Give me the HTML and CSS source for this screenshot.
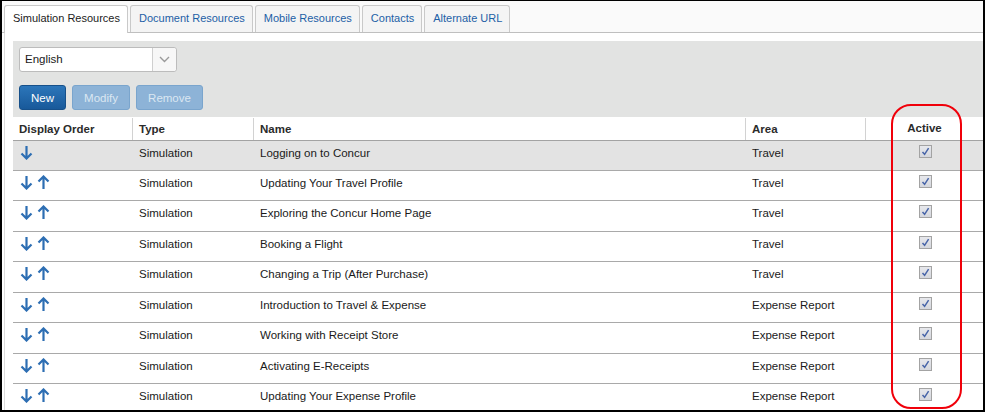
FILE: index.html
```html
<!DOCTYPE html>
<html lang="en">
<head>
<meta charset="utf-8">
<title>Simulation Resources</title>
<link rel="stylesheet" href="styles.css">
</head>
<body>
<div class="frame">
  <div class="tabs">
    <div class="tab active">Simulation Resources</div>
    <div class="tab">Document Resources</div>
    <div class="tab">Mobile Resources</div>
    <div class="tab">Contacts</div>
    <div class="tab">Alternate URL</div>
  </div>
  <div class="pane">
    <div class="toolbar">
      <div class="select">
        <span class="select-text">English</span>
        <span class="select-btn"><svg width="11" height="7" viewBox="0 0 11 7"><path d="M1 1 L5.5 5.5 L10 1" fill="none" stroke="#9a9a9a" stroke-width="1.4"/></svg></span>
      </div>
      <div class="buttons">
        <button class="btn primary">New</button>
        <button class="btn disabled">Modify</button>
        <button class="btn disabled">Remove</button>
      </div>
    </div>
    <div class="grid">
      <div class="row head">
        <div class="cell sep">Display Order</div>
        <div class="cell sep">Type</div>
        <div class="cell sep">Name</div>
        <div class="cell sep">Area</div>
        <div class="cell center">Active</div>
      </div>
      <div class="row hover">
        <div class="cell order"><svg class="arrow" viewBox="0 0 13 15"><path d="M6.5 1 V13.5 M1.5 8.5 L6.5 13.5 L11.5 8.5"/></svg></div>
        <div class="cell">Simulation</div>
        <div class="cell">Logging on to Concur</div>
        <div class="cell">Travel</div>
        <div class="cell center"><span class="check"><svg viewBox="0 0 11 11"><path d="M2.5 6 L4.6 8.3 L8.6 2.2"/></svg></span></div>
      </div>
      <div class="row">
        <div class="cell order"><svg class="arrow" viewBox="0 0 13 15"><path d="M6.5 1 V13.5 M1.5 8.5 L6.5 13.5 L11.5 8.5"/></svg><svg class="arrow" viewBox="0 0 13 15"><path d="M6.5 14 V1.5 M1.5 6.5 L6.5 1.5 L11.5 6.5"/></svg></div>
        <div class="cell">Simulation</div>
        <div class="cell">Updating Your Travel Profile</div>
        <div class="cell">Travel</div>
        <div class="cell center"><span class="check"><svg viewBox="0 0 11 11"><path d="M2.5 6 L4.6 8.3 L8.6 2.2"/></svg></span></div>
      </div>
      <div class="row">
        <div class="cell order"><svg class="arrow" viewBox="0 0 13 15"><path d="M6.5 1 V13.5 M1.5 8.5 L6.5 13.5 L11.5 8.5"/></svg><svg class="arrow" viewBox="0 0 13 15"><path d="M6.5 14 V1.5 M1.5 6.5 L6.5 1.5 L11.5 6.5"/></svg></div>
        <div class="cell">Simulation</div>
        <div class="cell">Exploring the Concur Home Page</div>
        <div class="cell">Travel</div>
        <div class="cell center"><span class="check"><svg viewBox="0 0 11 11"><path d="M2.5 6 L4.6 8.3 L8.6 2.2"/></svg></span></div>
      </div>
      <div class="row">
        <div class="cell order"><svg class="arrow" viewBox="0 0 13 15"><path d="M6.5 1 V13.5 M1.5 8.5 L6.5 13.5 L11.5 8.5"/></svg><svg class="arrow" viewBox="0 0 13 15"><path d="M6.5 14 V1.5 M1.5 6.5 L6.5 1.5 L11.5 6.5"/></svg></div>
        <div class="cell">Simulation</div>
        <div class="cell">Booking a Flight</div>
        <div class="cell">Travel</div>
        <div class="cell center"><span class="check"><svg viewBox="0 0 11 11"><path d="M2.5 6 L4.6 8.3 L8.6 2.2"/></svg></span></div>
      </div>
      <div class="row">
        <div class="cell order"><svg class="arrow" viewBox="0 0 13 15"><path d="M6.5 1 V13.5 M1.5 8.5 L6.5 13.5 L11.5 8.5"/></svg><svg class="arrow" viewBox="0 0 13 15"><path d="M6.5 14 V1.5 M1.5 6.5 L6.5 1.5 L11.5 6.5"/></svg></div>
        <div class="cell">Simulation</div>
        <div class="cell">Changing a Trip (After Purchase)</div>
        <div class="cell">Travel</div>
        <div class="cell center"><span class="check"><svg viewBox="0 0 11 11"><path d="M2.5 6 L4.6 8.3 L8.6 2.2"/></svg></span></div>
      </div>
      <div class="row">
        <div class="cell order"><svg class="arrow" viewBox="0 0 13 15"><path d="M6.5 1 V13.5 M1.5 8.5 L6.5 13.5 L11.5 8.5"/></svg><svg class="arrow" viewBox="0 0 13 15"><path d="M6.5 14 V1.5 M1.5 6.5 L6.5 1.5 L11.5 6.5"/></svg></div>
        <div class="cell">Simulation</div>
        <div class="cell">Introduction to Travel &amp; Expense</div>
        <div class="cell">Expense Report</div>
        <div class="cell center"><span class="check"><svg viewBox="0 0 11 11"><path d="M2.5 6 L4.6 8.3 L8.6 2.2"/></svg></span></div>
      </div>
      <div class="row">
        <div class="cell order"><svg class="arrow" viewBox="0 0 13 15"><path d="M6.5 1 V13.5 M1.5 8.5 L6.5 13.5 L11.5 8.5"/></svg><svg class="arrow" viewBox="0 0 13 15"><path d="M6.5 14 V1.5 M1.5 6.5 L6.5 1.5 L11.5 6.5"/></svg></div>
        <div class="cell">Simulation</div>
        <div class="cell">Working with Receipt Store</div>
        <div class="cell">Expense Report</div>
        <div class="cell center"><span class="check"><svg viewBox="0 0 11 11"><path d="M2.5 6 L4.6 8.3 L8.6 2.2"/></svg></span></div>
      </div>
      <div class="row">
        <div class="cell order"><svg class="arrow" viewBox="0 0 13 15"><path d="M6.5 1 V13.5 M1.5 8.5 L6.5 13.5 L11.5 8.5"/></svg><svg class="arrow" viewBox="0 0 13 15"><path d="M6.5 14 V1.5 M1.5 6.5 L6.5 1.5 L11.5 6.5"/></svg></div>
        <div class="cell">Simulation</div>
        <div class="cell">Activating E-Receipts</div>
        <div class="cell">Expense Report</div>
        <div class="cell center"><span class="check"><svg viewBox="0 0 11 11"><path d="M2.5 6 L4.6 8.3 L8.6 2.2"/></svg></span></div>
      </div>
      <div class="row">
        <div class="cell order"><svg class="arrow" viewBox="0 0 13 15"><path d="M6.5 1 V13.5 M1.5 8.5 L6.5 13.5 L11.5 8.5"/></svg><svg class="arrow" viewBox="0 0 13 15"><path d="M6.5 14 V1.5 M1.5 6.5 L6.5 1.5 L11.5 6.5"/></svg></div>
        <div class="cell">Simulation</div>
        <div class="cell">Updating Your Expense Profile</div>
        <div class="cell">Expense Report</div>
        <div class="cell center"><span class="check"><svg viewBox="0 0 11 11"><path d="M2.5 6 L4.6 8.3 L8.6 2.2"/></svg></span></div>
      </div>
    </div>
  </div>
  <div class="annot"></div>
</div>
</body>
</html>
```

FILE: styles.css
```css
* { box-sizing: border-box; }
html, body { margin: 0; padding: 0; background: #fff; }
body { font-family: "Liberation Sans", Arial, sans-serif; font-size: 11.5px; color: #1a1a1a; }

.frame {
  position: relative;
  width: 985px;
  height: 412px;
  border-style: solid;
  border-color: #000;
  border-width: 1px 2px 2px 2px;
  overflow: hidden;
  background: #fff;
  display: flex;
  flex-direction: column;
}

.tabs {
  display: flex;
  gap: 2px;
  padding: 4px 0 0 2px;
  background: #fafafa;
  border-bottom: 1px solid #bfbfbf;
  height: 32px;
}
.tab {
  height: 27px;
  padding: 0 7px 0 8px;
  border: 1px solid #c9c9c9;
  border-bottom: none;
  border-radius: 3px 3px 0 0;
  background: #f4f4f4;
  color: #1d5fa6;
  font-size: 11px;
  line-height: 25px;
  white-space: nowrap;
}
.tab.active {
  background: #fff;
  color: #222;
  height: 28px;
  margin-bottom: -1px;
  position: relative;
}

.pane {
  flex: 1;
  margin-left: 2px;
  border-left: 1px solid #dcdcdc;
  padding: 8px 0 0 8px;
  background: #fff;
}

.toolbar {
  background: #e2e3e2;
  padding: 6px 6px 7px;
  height: 76px;
  display: flex;
  flex-direction: column;
  gap: 13px;
}
.select {
  width: 158px;
  height: 25px;
  display: flex;
  background: #fff;
  border: 1px solid #bcbcbc;
  border-radius: 3px;
}
.select-text {
  flex: 1;
  padding-left: 5px;
  line-height: 23px;
  color: #1a1a1a;
}
.select-btn {
  width: 24px;
  border-left: 1px solid #cfcfcf;
  display: flex;
  align-items: center;
  justify-content: center;
  background: #f7f7f7;
  border-radius: 0 3px 3px 0;
}
.buttons { display: flex; gap: 6px; }
.btn {
  height: 25px;
  padding: 0 10px;
  font-family: "Liberation Sans", Arial, sans-serif;
  font-size: 11.5px;
  border-radius: 3px;
  border: 1px solid;
  margin: 0;
}
.btn.primary {
  width: 47px;
  background: linear-gradient(#2c76ba, #18599a);
  border-color: #16508a;
  color: #fff;
}
.btn.disabled {
  background: #8db3d7;
  border-color: #7aa5cd;
  color: #dbe7f2;
}
.btn.disabled:nth-child(2) { width: 58px; }
.btn.disabled:nth-child(3) { width: 67px; }

.grid { display: flex; flex-direction: column; }
.row {
  display: grid;
  grid-template-columns: 120px 121px 492px 120px 1fr;
  height: 30.43px;
  border-bottom: 1px solid #a9a9a9;
}
.row.head {
  height: 24px;
  font-weight: bold;
  color: #2b2b2b;
  background: #fff;
  border-bottom: 1px solid #a3a3a3;
}
.row.hover { background: #e3e3e3; height: 30px; }
.cell {
  padding: 5px 6px 0;
  line-height: 15px;
  white-space: nowrap;
  display: flex;
  align-items: flex-start;
}
.head .cell { align-items: center; padding-top: 0; height: 23px; }
.head .cell.sep { border-right: 1px solid #d2d2d2; margin: 1px 0 0; height: 22px; }
.cell.center { justify-content: center; padding-top: 4px; }
.head .cell.center { padding-top: 0; }
.cell.order { padding-left: 7px; gap: 4px; padding-top: 4px; }

.arrow {
  width: 13px;
  height: 15px;
  fill: none;
  stroke: #2d6eb3;
  stroke-width: 2.2;
}

.check {
  width: 13px;
  height: 13px;
  border: 1px solid #a3a3a3;
  background: linear-gradient(#e7e8ec, #d5d7dd);
  display: flex;
  margin-left: 1px;
}
.check svg {
  width: 11px;
  height: 11px;
  fill: none;
  stroke: #4764a8;
  stroke-width: 1.5;
}

.annot {
  position: absolute;
  left: 889px;
  top: 103px;
  width: 71px;
  height: 305px;
  border: 2px solid #f0000a;
  border-radius: 20px;
  pointer-events: none;
}
```
